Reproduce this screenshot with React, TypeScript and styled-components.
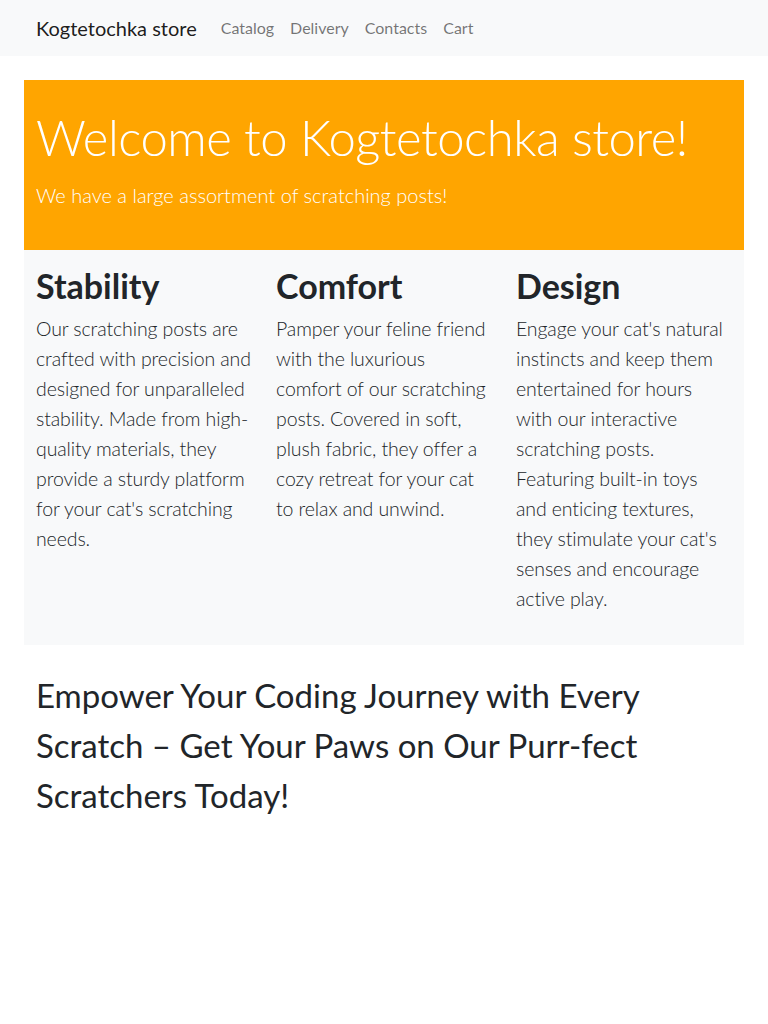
import styled, { createGlobalStyle } from 'styled-components';

const GlobalStyle = createGlobalStyle`
	* {
		box-sizing: border-box;
	}
	body {
		margin: 0;
		font-family: Lato, 'Open Sans', sans-serif;
		font-size: 16px;
		line-height: 1.5;
		color: #212529;
		background: #fff;
	}
	h1, h2, p {
		margin: 0;
	}
`;

const NAV_LINKS = ['Catalog', 'Delivery', 'Contacts', 'Cart'];

const FEATURES = [
	{
		id: 'stability',
		title: 'Stability',
		text: "Our scratching posts are crafted with precision and designed for unparalleled stability. Made from high-quality materials, they provide a sturdy platform for your cat's scratching needs.",
	},
	{
		id: 'comfort',
		title: 'Comfort',
		text: 'Pamper your feline friend with the luxurious comfort of our scratching posts. Covered in soft, plush fabric, they offer a cozy retreat for your cat to relax and unwind.',
	},
	{
		id: 'design',
		title: 'Design',
		text: "Engage your cat's natural instincts and keep them entertained for hours with our interactive scratching posts. Featuring built-in toys and enticing textures, they stimulate your cat's senses and encourage active play.",
	},
];

const App = () => {
	return (
		<>
			<GlobalStyle />
			<Navbar>
				<NavContainer>
					<Brand href="#">Kogtetochka store</Brand>
					<NavList>
						{NAV_LINKS.map((link) => (
							<NavLink key={link} href="#">
								{link}
							</NavLink>
						))}
					</NavList>
				</NavContainer>
			</Navbar>

			<Main>
				<Hero>
					<HeroTitle>Welcome to Kogtetochka store!</HeroTitle>
					<Lead>We have a large assortment of scratching posts!</Lead>
				</Hero>

				<Features>
					{FEATURES.map(({ id, title, text }) => (
						<Feature key={id}>
							<FeatureTitle>{title}</FeatureTitle>
							<FeatureText>{text}</FeatureText>
						</Feature>
					))}
				</Features>

				<Slogan>
					Empower Your Coding Journey with Every Scratch – Get Your Paws on Our Purr-fect
					Scratchers Today!
				</Slogan>
			</Main>
		</>
	);
};
export default App;

const Navbar = styled.nav`
	background-color: #f8f9fa;
	height: 56px;
	display: flex;
	align-items: center;
`;

const NavContainer = styled.div`
	width: 720px;
	margin: 0 auto;
	padding: 0 12px;
	display: flex;
	align-items: center;
`;

const Brand = styled.a`
	font-size: 20px;
	color: rgba(0, 0, 0, 0.9);
	text-decoration: none;
	margin-right: 16px;
	line-height: 30px;
`;

const NavList = styled.div`
	display: flex;
`;

const NavLink = styled.a`
	font-size: 16px;
	color: rgba(0, 0, 0, 0.55);
	text-decoration: none;
	padding: 8px;
`;

const Main = styled.main`
	width: 720px;
	margin: 24px auto 0;
`;

const Hero = styled.section`
	background-color: #ffa500;
	color: #fff;
	padding: 28px 12px 40px;
`;

const HeroTitle = styled.h1`
	font-size: 49px;
	font-weight: 300;
	letter-spacing: -0.5px;
	line-height: 1.2;
	margin-bottom: 13px;
`;

const Lead = styled.p`
	font-size: 20px;
	font-weight: 300;
	line-height: 30px;
`;

const Features = styled.section`
	background-color: #f8f9fa;
	display: grid;
	grid-template-columns: repeat(3, 1fr);
	padding: 16px 0 31px;
`;

const Feature = styled.div`
	padding: 0 12px;
`;

const FeatureTitle = styled.h2`
	font-size: 34px;
	font-weight: 700;
	line-height: 1.2;
	margin-bottom: 7px;
`;

const FeatureText = styled.p`
	font-size: 19.5px;
	font-weight: 300;
	letter-spacing: -0.1px;
	line-height: 30px;
`;

const Slogan = styled.h2`
	font-size: 33px;
	font-weight: 400;
	line-height: 50px;
	padding: 25px 12px;
`;
